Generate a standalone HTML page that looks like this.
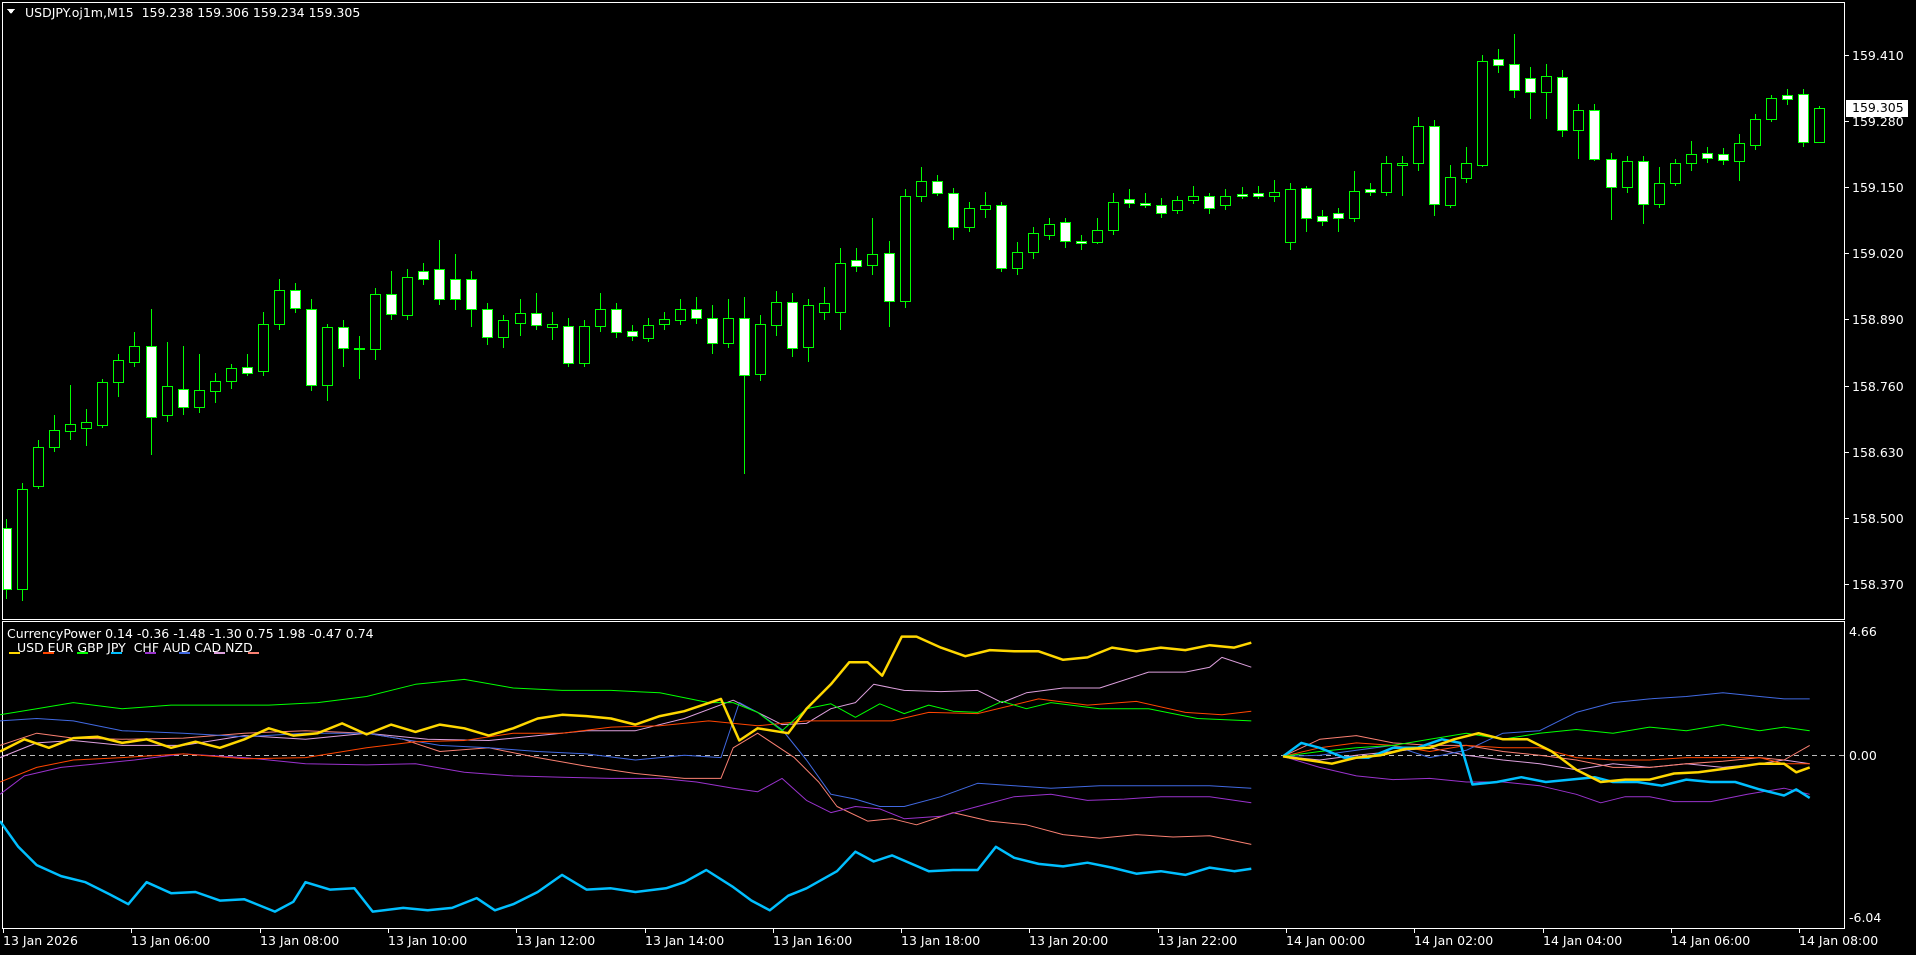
<!DOCTYPE html>
<html><head><meta charset="utf-8"><style>
html,body{margin:0;padding:0;background:#000;width:1916px;height:955px;overflow:hidden}
.t{position:absolute;color:#fff;font-family:"DejaVu Sans","Liberation Sans",sans-serif;font-size:12.5px;white-space:nowrap;line-height:14px}
svg{position:absolute;left:0;top:0}
</style></head><body>
<svg id="s" width="1916" height="955" viewBox="0 0 1916 955" shape-rendering="crispEdges"></svg>
<div class="t" style="left:25px;top:6px">USDJPY.oj1m,M15&nbsp; 159.238 159.306 159.234 159.305</div>
<div class="t" style="left:7px;top:627px">CurrencyPower 0.14 -0.36 -1.48 -1.30 0.75 1.98 -0.47 0.74</div>
<div class="t" style="left:17px;top:641px">USD&nbsp;EUR&nbsp;GBP&nbsp;JPY&nbsp;&nbsp;CHF&nbsp;AUD&nbsp;CAD&nbsp;NZD</div>
<div id="lab"></div>
<script>
var k=1916/1568,S=document.getElementById('s'),ns='http://www.w3.org/2000/svg',h='';
function L(x1,y1,x2,y2,c,w,extra){h+='<line x1="'+x1+'" y1="'+y1+'" x2="'+x2+'" y2="'+y2+'" stroke="'+c+'" stroke-width="'+(w||1)+'" '+(extra||'')+'/>';}
// frames
h+='<rect x="2.5" y="2.5" width="1842" height="617" fill="none" stroke="#fff"/>';
h+='<rect x="2.5" y="621.5" width="1842" height="307" fill="none" stroke="#fff"/>';
// zero line
L(3,755.5,1844,755.5,'#bbb',1,'stroke-dasharray="5,4"');
var C=[
['d',432,482,425,490],['u',400,482,395,492],['u',366,398,360,400],['u',352,366,340,370],['u',347,353,315,360],['u',345,350,335,365],['u',313,348,310,350],['u',295,313,290,325],['u',283,296,272,300],['d',283,341,253,372],
['u',316,340,280,345],['d',318,333,283,340],['u',319,333,290,338],['u',312,320,305,330],['u',301,312,298,318],['d',300,305,290,308],['u',265,304,255,308],['u',237,265,228,270],['d',237,252,232,256],['d',253,315,245,320],
['u',268,315,265,328],['d',268,285,262,300],['u',285,286,275,310],['u',241,286,236,295],['d',241,257,222,262],['u',227,258,220,262],['d',222,228,215,233],['d',220,245,196,250],['d',228,245,208,254],['d',228,253,222,268],
['d',253,276,248,282],['u',262,276,258,285],['u',256,264,245,275],['d',256,266,240,270],['u',265,268,255,278],['d',267,297,260,300],['u',267,297,262,300],['u',253,267,240,272],['d',253,272,248,277],['d',271,275,266,279],
['u',266,277,260,280],['u',261,265,255,270],['u',253,262,245,266],['d',253,260,243,265],['d',260,281,250,290],['u',260,281,245,285],['d',260,307,243,388],['u',265,306,258,312],['u',247,266,238,275],['d',247,285,240,292],
['u',250,284,245,296],['u',248,255,235,262],['u',215,255,203,270],['d',213,218,203,223],['u',208,217,178,225],['d',207,246,197,268],['u',160,246,155,252],['u',148,160,137,165],['d',148,158,143,160],['d',158,186,154,196],
['u',170,186,165,190],['u',168,171,157,178],['d',168,219,165,223],['u',206,219,198,225],['u',191,206,186,212],['u',183,192,178,196],['d',182,197,178,203],['d',197,199,192,205],['u',188,198,178,200],['u',165,188,158,192],
['d',163,166,155,170],['d',166,168,158,170],['d',168,174,162,178],['u',164,172,160,175],['u',160,164,152,167],['d',160,170,158,175],['u',160,168,155,172],['d',159,160,153,163],['d',158,160,152,163],['u',157,160,147,165],
['u',155,198,150,205],['d',154,178,152,190],['d',177,181,172,185],['d',174,178,170,190],['u',156,178,140,182],['d',155,157,150,160],['u',133,157,128,160],['u',133,135,128,160],['u',103,133,96,140],['d',103,167,98,177],
['u',145,168,135,170],['u',133,146,120,150],['u',50,135,45,137],['d',48,53,40,60],['d',52,74,28,80],['d',64,75,55,97],['u',62,75,52,97],['d',63,106,57,112],['u',90,106,85,130],['d',90,130,85,132],
['d',130,153,125,180],['u',132,153,128,158],['d',132,167,128,183],['u',150,167,137,170],['u',133,150,130,152],['u',126,133,115,140],['d',125,129,120,133],['d',126,131,121,135],['u',117,132,110,148],['u',97,119,93,123],
['u',80,97,78,100],['d',78,81,73,86],['d',77,116,73,120],['u',88,116,87,117]];
h+='<g>';
for(var i=0;i<C.length;i++){var c=C[i],x=Math.round((5+13.13*i)*k)+0.5;
 var bt=Math.round(c[1]*k),bb=Math.round(c[2]*k),wt=Math.round(c[3]*k),wb=Math.round(c[4]*k);
 if(bb-bt<1)bb=bt+1;
 L(x,wt,x,bt,'#00ff00');L(x,bb,x,wb,'#00ff00');
 var xl=Math.max(3.5,x-5);
 h+='<rect x="'+xl+'" y="'+(bt+0.5)+'" width="'+(x+5-xl)+'" height="'+(bb-bt)+'" fill="'+(c[0]=='d'?'#fff':'#000')+'" stroke="#00ff00"/>';}
h+='</g>';
function P(pts,c,w){var s='';for(var i=0;i<pts.length;i+=2)s+=(pts[i]*k).toFixed(1)+','+(pts[i+1]*k).toFixed(1)+' ';
 h+='<polyline points="'+s+'" fill="none" stroke="'+c+'" stroke-width="'+w+'" shape-rendering="auto" stroke-linejoin="round"/>';}
var A={
cad:[0,620,30,608,60,606,100,610,150,610,200,602,250,605,300,600,350,605,400,606,440,602,480,598,520,598,560,588,600,573,640,593,660,592,680,580,700,575,715,560,740,565,770,566,800,565,820,575,840,567,870,563,900,563,940,550,970,550,990,546,1000,538,1024,546],
nzd:[0,610,30,600,60,604,100,605,150,604,200,600,250,598,300,600,330,605,360,615,400,612,440,620,480,627,520,633,560,637,590,637,600,612,620,600,650,620,670,640,685,660,710,672,730,670,750,675,780,665,810,672,840,675,870,683,900,686,930,683,960,685,990,684,1024,691],
aud:[0,590,30,588,60,590,100,598,150,600,200,603,250,600,300,600,330,605,360,610,400,612,440,615,480,617,520,622,560,618,590,620,605,575,620,583,640,597,660,622,680,650,700,654,720,660,740,660,770,652,800,641,830,643,860,645,900,643,950,643,990,643,1024,645],
chf:[0,650,20,635,50,628,80,625,110,622,150,617,200,620,250,625,300,626,340,625,380,632,420,635,460,636,500,637,540,637,570,640,600,645,620,648,640,637,660,655,680,665,700,660,720,662,740,670,770,668,800,660,830,652,860,650,890,655,920,654,950,652,990,652,1024,657],
eur:[0,640,30,628,60,622,100,620,150,617,200,621,250,620,300,612,340,607,380,606,420,600,460,600,500,595,540,594,580,590,620,594,660,590,700,590,730,590,760,583,800,584,850,572,890,577,930,574,970,583,1000,585,1024,582],
gbp:[0,585,30,580,60,575,100,580,140,577,180,577,220,577,260,575,300,570,340,560,380,556,420,563,460,565,500,565,540,567,580,575,600,575,620,583,640,598,660,580,680,576,700,587,720,576,740,584,760,577,780,582,800,583,820,574,840,580,860,575,900,580,940,580,980,588,1024,590],
jpy:[0,672,15,693,30,708,50,717,70,722,90,732,105,740,120,722,140,731,160,730,180,737,200,736,225,746,240,738,250,722,270,728,290,727,305,746,330,743,350,745,370,743,390,735,405,745,420,740,440,730,460,716,480,728,500,727,520,730,545,727,560,722,578,712,600,726,615,737,630,745,645,733,660,727,685,713,700,697,715,705,730,700,760,713,780,712,800,712,815,693,830,702,850,707,870,709,890,706,910,710,930,715,950,713,970,716,990,710,1010,713,1024,711],
usd:[0,615,20,605,40,612,60,604,80,603,100,608,120,605,140,612,160,607,180,612,200,605,220,596,240,602,260,600,280,592,300,601,320,593,340,599,360,593,380,596,400,602,420,596,440,588,460,585,480,586,500,588,520,593,540,586,560,582,590,572,605,606,620,596,645,600,660,580,680,560,695,542,710,542,722,553,738,521,750,521,770,530,790,537,810,532,830,533,850,533,870,540,890,538,910,530,930,533,950,530,970,532,990,528,1010,530,1024,526]};
var B={
cad:[1050,619,1080,622,1110,618,1140,615,1170,612,1200,618,1230,622,1260,625,1290,630,1320,625,1350,628,1380,625,1410,628,1440,625,1460,622,1481,625],
nzd:[1050,619,1080,605,1110,602,1140,608,1170,610,1200,610,1230,615,1260,618,1290,622,1320,628,1350,628,1380,625,1410,623,1440,620,1460,622,1481,610],
aud:[1050,619,1080,618,1110,614,1140,610,1170,620,1200,614,1230,600,1260,598,1290,583,1320,575,1350,572,1380,570,1410,567,1440,570,1460,572,1481,572],
chf:[1050,619,1080,628,1110,635,1140,638,1170,637,1200,640,1230,640,1260,643,1290,650,1310,657,1330,652,1350,652,1370,656,1400,656,1430,650,1460,645,1481,650],
eur:[1050,619,1080,612,1110,608,1140,610,1170,615,1200,610,1230,612,1260,612,1290,620,1320,622,1350,622,1380,620,1410,620,1440,620,1460,625,1481,625],
gbp:[1050,619,1080,615,1110,612,1140,610,1170,605,1200,600,1230,605,1260,600,1290,597,1320,600,1350,595,1380,598,1410,593,1440,598,1460,595,1481,598],
jpy:[1050,619,1065,608,1080,612,1100,620,1120,620,1140,612,1160,612,1180,605,1195,608,1205,642,1225,640,1245,636,1265,640,1285,638,1305,636,1320,640,1340,640,1360,643,1380,638,1400,640,1420,640,1440,646,1460,651,1470,646,1481,653],
usd:[1050,619,1070,622,1090,625,1110,620,1130,618,1150,613,1170,612,1190,605,1210,600,1230,605,1250,605,1270,615,1290,630,1310,640,1330,638,1350,638,1370,633,1390,632,1420,628,1440,625,1460,625,1470,632,1481,628]};
var col={cad:['#dda0dd',1],nzd:['#fa8072',1],aud:['#4169e1',1],chf:['#9932cc',1],eur:['#ff4500',1],gbp:['#00ff00',1],jpy:['#00bfff',2.5],usd:['#ffd700',2.5]};
for(var n in col){P(A[n],col[n][0],col[n][1]);P(B[n],col[n][0],col[n][1]);}
// legend color marks
var lc=['#ffd700','#ff4500','#00ff00','#00bfff','#9932cc','#4169e1','#dda0dd','#fa8072'],lx=[9,43,77,111,145,179,214,248];
for(var i=0;i<8;i++)h+='<rect x="'+lx[i]+'" y="652" width="11" height="2" fill="'+lc[i]+'"/>';
// title triangle
h+='<polygon points="7,9 15,9 11,14" fill="#fff"/>';
// price ticks
var pl=['159.410','159.280','159.150','159.020','158.890','158.760','158.630','158.500','158.370'],lab='';
for(var i=0;i<9;i++){var y=Math.round(55+66.1*i)+0.5;L(1845,y,1849,y,'#fff');lab+='<div class="t" style="left:1852px;top:'+(y-7)+'px">'+pl[i]+'</div>';}
h+='<rect x="1846" y="100" width="62" height="17" fill="#fff"/>';
lab+='<div class="t" style="left:1852px;top:101px;color:#000">159.305</div>';
lab+='<div class="t" style="left:1849px;top:625px">4.66</div><div class="t" style="left:1849px;top:749px">0.00</div><div class="t" style="left:1849px;top:911px">-6.04</div>';
var tl=['13 Jan 2026','13 Jan 06:00','13 Jan 08:00','13 Jan 10:00','13 Jan 12:00','13 Jan 14:00','13 Jan 16:00','13 Jan 18:00','13 Jan 20:00','13 Jan 22:00','14 Jan 00:00','14 Jan 02:00','14 Jan 04:00','14 Jan 06:00','14 Jan 08:00'];
for(var i=0;i<15;i++){var x=Math.round(3+128.3*i)+0.5;L(x,929,x,933,'#fff');lab+='<div class="t" style="left:'+(x-0.5)+'px;top:934px">'+tl[i]+'</div>';}
S.innerHTML=h;document.getElementById('lab').innerHTML=lab;
</script>
</body></html>
